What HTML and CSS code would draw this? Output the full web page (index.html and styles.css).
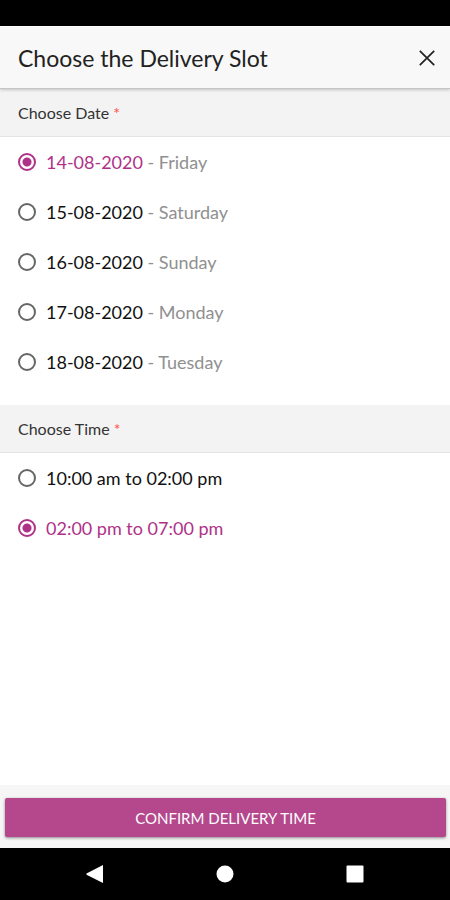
FILE: index.html
```html
<!DOCTYPE html>
<html lang="en">
<head>
<meta charset="utf-8">
<meta name="viewport" content="width=device-width, initial-scale=1">
<title>Choose the Delivery Slot</title>
<link rel="stylesheet" href="styles.css">
</head>
<body>
<div class="status-bar"></div>
<header class="header">
  <h1 class="title">Choose the Delivery Slot</h1>
  <button class="close" type="button" aria-label="Close">
    <svg width="16" height="16" viewBox="0 0 16 16" fill="none" stroke="currentColor" stroke-width="1.7"><path d="M.8.8l14.4 14.4M15.2.8L.8 15.2"/></svg>
  </button>
</header>
<form class="form">
  <main class="content">
    <section role="radiogroup" aria-labelledby="date-heading">
      <h2 class="section-title" id="date-heading">Choose Date <span class="required">*</span></h2>
      <div class="options">
        <label class="option"><input class="radio" type="radio" name="date" checked><span><span class="value">14-08-2020</span> - Friday</span></label>
        <label class="option"><input class="radio" type="radio" name="date"><span><span class="value">15-08-2020</span> - Saturday</span></label>
        <label class="option"><input class="radio" type="radio" name="date"><span><span class="value">16-08-2020</span> - Sunday</span></label>
        <label class="option"><input class="radio" type="radio" name="date"><span><span class="value">17-08-2020</span> - Monday</span></label>
        <label class="option"><input class="radio" type="radio" name="date"><span><span class="value">18-08-2020</span> - Tuesday</span></label>
      </div>
    </section>
    <section role="radiogroup" aria-labelledby="time-heading">
      <h2 class="section-title" id="time-heading">Choose Time <span class="required">*</span></h2>
      <div class="options">
        <label class="option"><input class="radio" type="radio" name="time"><span class="value">10:00 am to 02:00 pm</span></label>
        <label class="option"><input class="radio" type="radio" name="time" checked><span class="value">02:00 pm to 07:00 pm</span></label>
      </div>
    </section>
  </main>
  <footer class="footer">
    <button class="confirm" type="button">CONFIRM DELIVERY TIME</button>
  </footer>
</form>
<nav class="system-nav" aria-label="System">
  <button class="nav-button" type="button" aria-label="Back"><svg width="18" height="18" viewBox="0 0 18 18" fill="currentColor"><path d="M17 0v18L.5 9.8V8.6z"/></svg></button>
  <button class="nav-button" type="button" aria-label="Home"><svg width="18" height="18" viewBox="0 0 18 18" fill="currentColor"><circle cx="9" cy="9" r="8.5"/></svg></button>
  <button class="nav-button" type="button" aria-label="Recent apps"><svg width="18" height="18" viewBox="0 0 18 18" fill="currentColor"><rect x=".5" y=".5" width="17" height="17" rx="1"/></svg></button>
</nav>
</body>
</html>
```
FILE: styles.css
```css
* {
  box-sizing: border-box;
}

body {
  display: flex;
  flex-direction: column;
  min-height: 100vh;
  margin: 0;
  background: #fff;
  color: #222;
  font-family: Lato, "Open Sans", sans-serif;
}

button {
  padding: 0;
  border: 0;
  background: none;
  font-family: inherit;
}

svg {
  display: block;
}

.status-bar {
  height: 26px;
  background: #000;
}

.header {
  position: relative;
  display: flex;
  align-items: center;
  justify-content: space-between;
  height: 63px;
  padding: 0 15px 0 18px;
  background: #f8f8f8;
  border-top: 1px solid #fff;
  border-bottom: 1px solid #c4c4c4;
  box-shadow: 0 1px 3px rgba(0, 0, 0, 0.2);
}

.title {
  margin: 0;
  font-size: 23px;
  font-weight: 400;
}

.close {
  color: #222;
}

.form {
  display: flex;
  flex: 1;
  flex-direction: column;
}

.content {
  flex: 1;
}

.section-title {
  height: 48px;
  margin: 0;
  padding: 0 18px;
  background: #f3f3f3;
  border-bottom: 1px solid #e4e4e4;
  color: #333;
  font-size: 16px;
  font-weight: 400;
  line-height: 47px;
}

.required {
  color: #ff4b4b;
}

.options {
  padding-bottom: 18px;
}

.option {
  display: flex;
  align-items: center;
  gap: 10px;
  height: 50px;
  padding: 0 18px;
  color: #909090;
  font-size: 18px;
}

.value {
  color: #111;
}

.radio {
  flex: none;
  width: 18px;
  height: 18px;
  margin: 0;
  appearance: none;
  border: 2px solid #666;
  border-radius: 50%;
}

.radio:checked {
  border-color: #af3289;
  background: radial-gradient(circle, #af3289 4px, transparent 5px);
}

.option:has(:checked) .value {
  color: #af3289;
}

.footer {
  padding: 13px 4px 11px 5px;
  background: #f6f6f6;
}

.confirm {
  display: block;
  width: 100%;
  height: 39px;
  border-radius: 2px;
  background: #b5478c;
  box-shadow: 0 1px 3px rgba(0, 0, 0, 0.45);
  color: #fff;
  font-size: 15px;
}

.system-nav {
  display: grid;
  grid-template-columns: repeat(3, 1fr);
  place-items: center;
  height: 52px;
  padding: 0 30px;
  background: #000;
}

.nav-button {
  color: #fff;
}
```
